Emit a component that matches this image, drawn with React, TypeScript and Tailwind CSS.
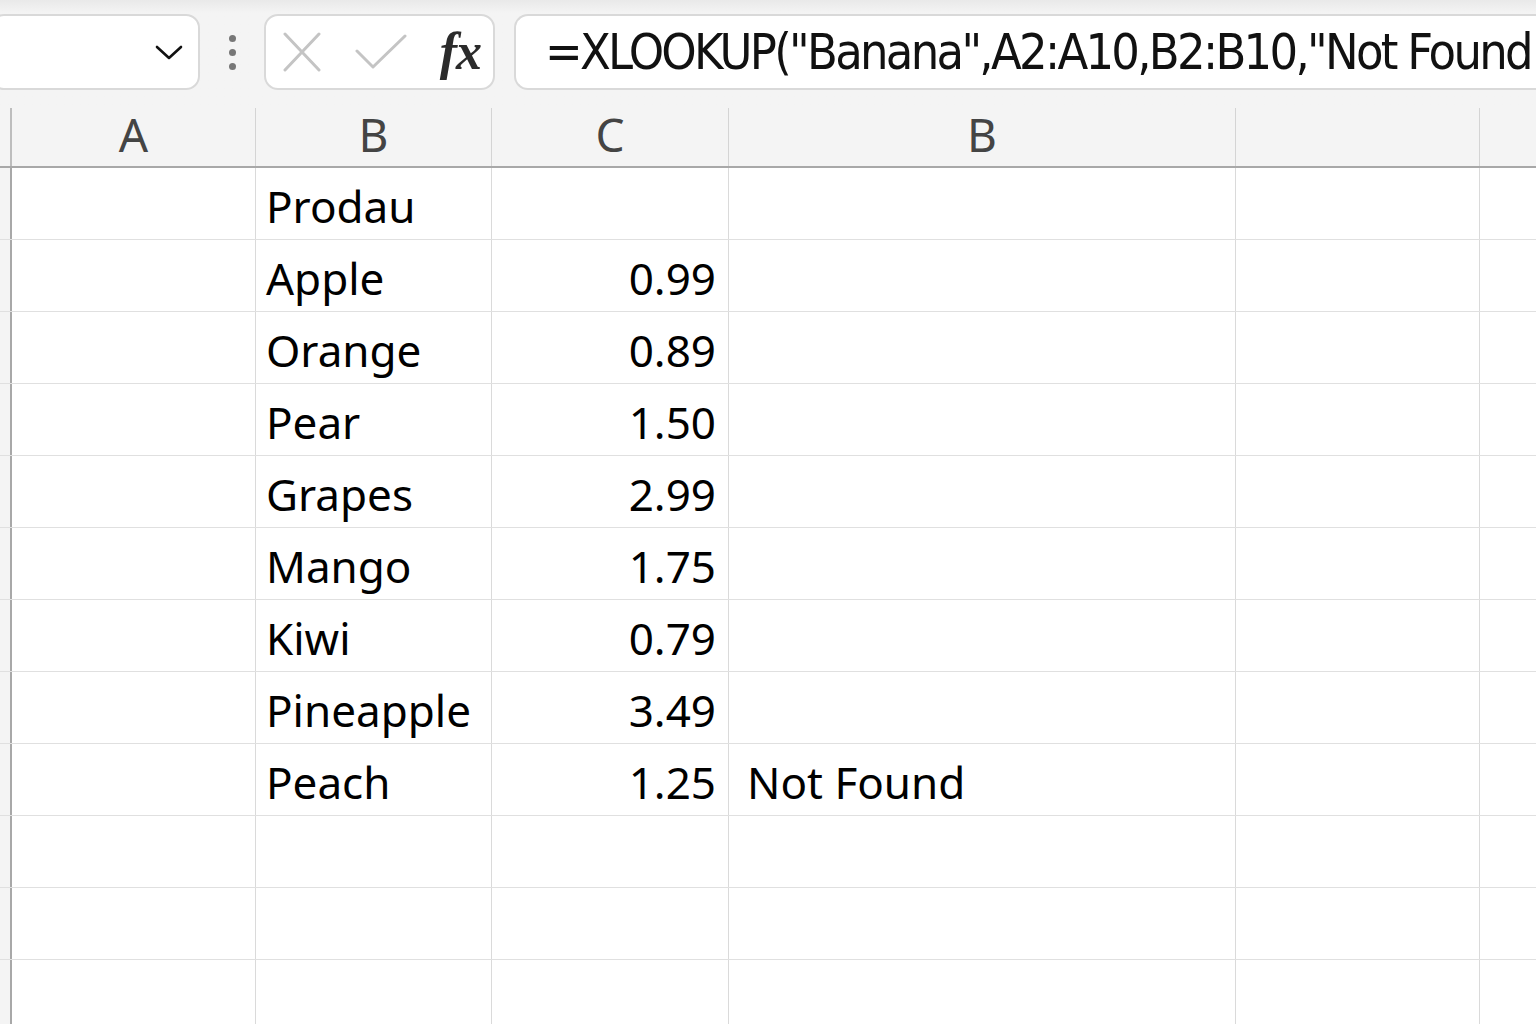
import React from "react";

const columns = [
  { label: "A", width: "w-[244px]" },
  { label: "B", width: "w-[236px]" },
  { label: "C", width: "w-[237px]" },
  { label: "B", width: "w-[507px]" },
  { label: "", width: "w-[244px]" },
  { label: "", width: "w-[80px]" },
];

const rows: { name?: string; price?: string; result?: string }[] = [
  { name: "Prodau" },
  { name: "Apple", price: "0.99" },
  { name: "Orange", price: "0.89" },
  { name: "Pear", price: "1.50" },
  { name: "Grapes", price: "2.99" },
  { name: "Mango", price: "1.75" },
  { name: "Kiwi", price: "0.79" },
  { name: "Pineapple", price: "3.49" },
  { name: "Peach", price: "1.25", result: "Not Found" },
  {},
  {},
  {},
];

function NameBox() {
  return (
    <div className="-ml-[10px] flex h-[76px] w-[210px] shrink-0 items-center justify-end rounded-[14px] border-2 border-[#d9d9d9] bg-white pr-[14px]">
      <svg width="30" height="18" viewBox="0 0 30 18" fill="none">
        <path d="M3 4 L15 15 L27 4" stroke="#111" strokeWidth="2.6" strokeLinecap="round" strokeLinejoin="round" />
      </svg>
    </div>
  );
}

function FxBox() {
  return (
    <div className="flex h-[76px] w-[231px] shrink-0 items-center rounded-[14px] border-2 border-[#d9d9d9] bg-white pl-[17px] pr-[12px]">
      <svg width="38" height="40" viewBox="0 0 38 40" fill="none" className="shrink-0">
        <path d="M2 2 L36 38 M36 2 L2 38" stroke="#c4c4c4" strokeWidth="3" strokeLinecap="round" />
      </svg>
      <svg width="52" height="38" viewBox="0 0 52 38" fill="none" className="ml-[34px] shrink-0">
        <path d="M2 18 L18 34 L50 3" stroke="#c4c4c4" strokeWidth="3" strokeLinecap="round" strokeLinejoin="round" />
      </svg>
      <span className="ml-auto font-['Liberation_Serif','DejaVu_Serif',serif] text-[52px] font-bold italic leading-none tracking-[-1px] text-[#2b2b2b]">
        fx
      </span>
    </div>
  );
}

export default function App() {
  return (
    <div className="relative h-[1024px] w-[1536px] overflow-hidden bg-white font-['Noto_Sans','Open_Sans',sans-serif] text-black">
      <div className="bg-[#f4f4f4]">
        {/* toolbar */}
        <div className="flex h-[108px] items-start bg-gradient-to-b from-[#e9e9e9] via-[#f4f4f4] via-[12%] to-[#f4f4f4] pt-[14px]">
          <NameBox />
          <div className="flex w-[64px] shrink-0 flex-col items-center justify-center gap-[7px] self-stretch pb-[18px]">
            <span className="h-[7px] w-[7px] rounded-full bg-[#777]" />
            <span className="h-[7px] w-[7px] rounded-full bg-[#777]" />
            <span className="h-[7px] w-[7px] rounded-full bg-[#777]" />
          </div>
          <FxBox />
          <div className="ml-[19px] flex h-[76px] min-w-0 flex-1 items-center overflow-hidden rounded-l-[14px] border-2 border-r-0 border-[#d9d9d9] bg-white pl-[29px]">
            <span className="whitespace-nowrap font-['DejaVu_Sans_Condensed','Noto_Sans',sans-serif] text-[50px] leading-none tracking-[-2.7px] text-[#111]">
              =XLOOKUP("Banana",A2:A10,B2:B10,"Not Found
            </span>
          </div>
        </div>
        {/* column headers */}
        <div className="flex h-[60px] border-b-2 border-[#a8a8a8]">
          <div className="w-[12px] shrink-0 border-r-2 border-[#bdbdbd]" />
          {columns.map((c, i) => (
            <div
              key={i}
              className={`${c.width} flex shrink-0 items-center justify-center border-r border-[#d4d4d4] pb-[6px] text-[46px] leading-none text-[#444]`}
            >
              {c.label}
            </div>
          ))}
        </div>
      </div>
      {/* grid */}
      <div className="flex flex-col">
        {rows.map((r, i) => (
          <div key={i} className="flex h-[72px] shrink-0 border-b border-[#e0e0e0]">
            <div className="w-[12px] shrink-0 border-r-2 border-[#a8a8a8] bg-[#f4f4f4]" />
            <div className="w-[244px] shrink-0 border-r border-[#dadada]" />
            <div className="flex w-[236px] shrink-0 items-center border-r border-[#dadada] pl-[10px] pt-[4px] text-[44px] leading-none">
              {r.name}
            </div>
            <div className="flex w-[237px] shrink-0 items-center justify-end border-r border-[#dadada] pr-[12px] pt-[4px] text-[44px] leading-none">
              {r.price}
            </div>
            <div className="flex w-[507px] shrink-0 items-center border-r border-[#dadada] pl-[18px] pt-[4px] text-[44px] leading-none">
              {r.result}
            </div>
            <div className="w-[244px] shrink-0 border-r border-[#dadada]" />
            <div className="w-[80px] shrink-0" />
          </div>
        ))}
      </div>
    </div>
  );
}
